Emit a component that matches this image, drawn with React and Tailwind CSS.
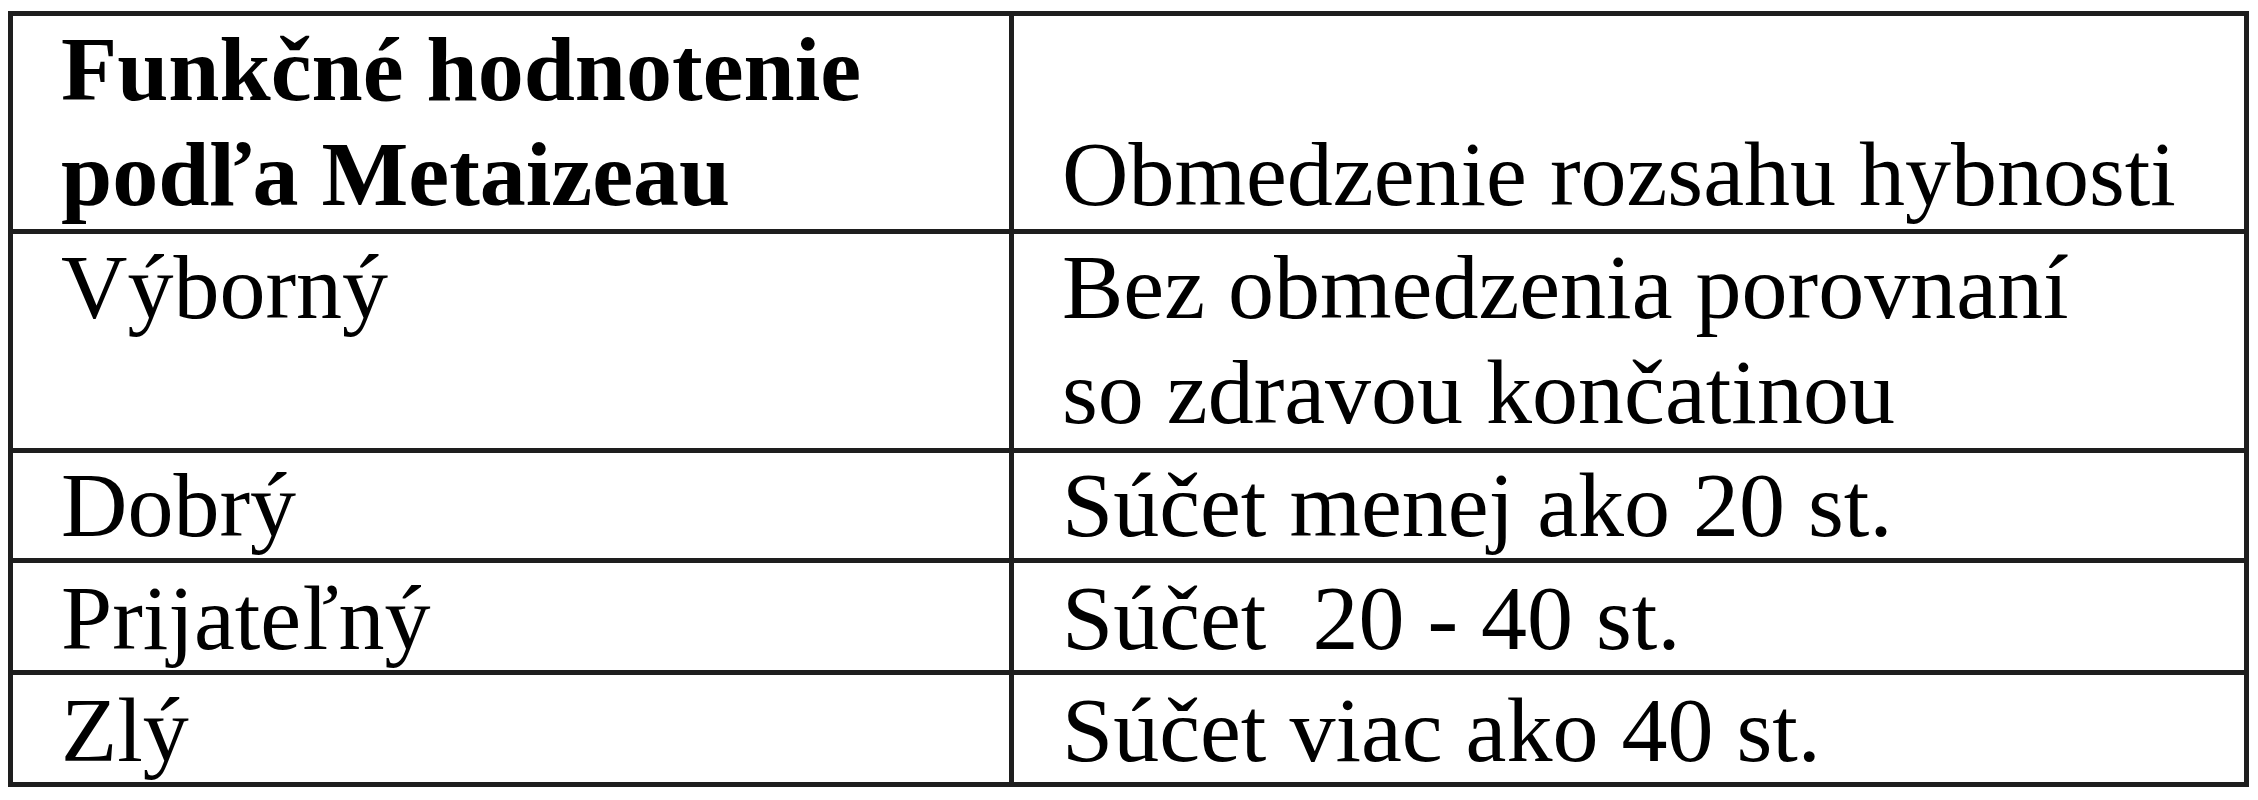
export default function App() {
  const font = { fontFamily: '"Liberation Serif", "Times New Roman", serif' };
  return (
    <div className="min-h-[800px] w-[2258px] bg-white pt-[11px] pl-[8px] text-black" style={font}>
      <div className="w-[2241px] border-[5px] border-[#1e1e1e] text-[92px] leading-[105px]">
        <div className="flex h-[213px]">
          <div className="w-[996px] pl-[48px] pt-[1px] font-bold">
            <div>Funkčné hodnotenie</div>
            <div>podľa Metaizeau</div>
          </div>
          <div className="flex w-[1230px] flex-col justify-end border-l-[5px] border-[#1e1e1e] pb-[2px] pl-[48px]">
            <div>Obmedzenie rozsahu hybnosti</div>
          </div>
        </div>
        <div className="flex h-[219px] border-t-[5px] border-[#1e1e1e]">
          <div className="w-[996px] pl-[48px] pt-[1px]">Výborný</div>
          <div className="w-[1230px] border-l-[5px] border-[#1e1e1e] pl-[48px] pt-[1px]">
            <div>Bez obmedzenia porovnaní</div>
            <div>so zdravou končatinou</div>
          </div>
        </div>
        <div className="flex h-[110px] border-t-[5px] border-[#1e1e1e]">
          <div className="w-[996px] pl-[48px] pt-[0px]">Dobrý</div>
          <div className="w-[1230px] border-l-[5px] border-[#1e1e1e] pl-[48px]">Súčet menej ako 20 st.</div>
        </div>
        <div className="flex h-[112px] border-t-[5px] border-[#1e1e1e]">
          <div className="w-[996px] pl-[48px] pt-[3px]">Prijateľný</div>
          <div className="w-[1230px] whitespace-pre border-l-[5px] border-[#1e1e1e] pl-[48px] pt-[3px]">Súčet  20 - 40 st.</div>
        </div>
        <div className="flex h-[112px] border-t-[5px] border-[#1e1e1e]">
          <div className="w-[996px] pl-[48px] pt-[3px]">Zlý</div>
          <div className="w-[1230px] border-l-[5px] border-[#1e1e1e] pl-[48px] pt-[3px]">Súčet viac ako 40 st.</div>
        </div>
      </div>
    </div>
  );
}
